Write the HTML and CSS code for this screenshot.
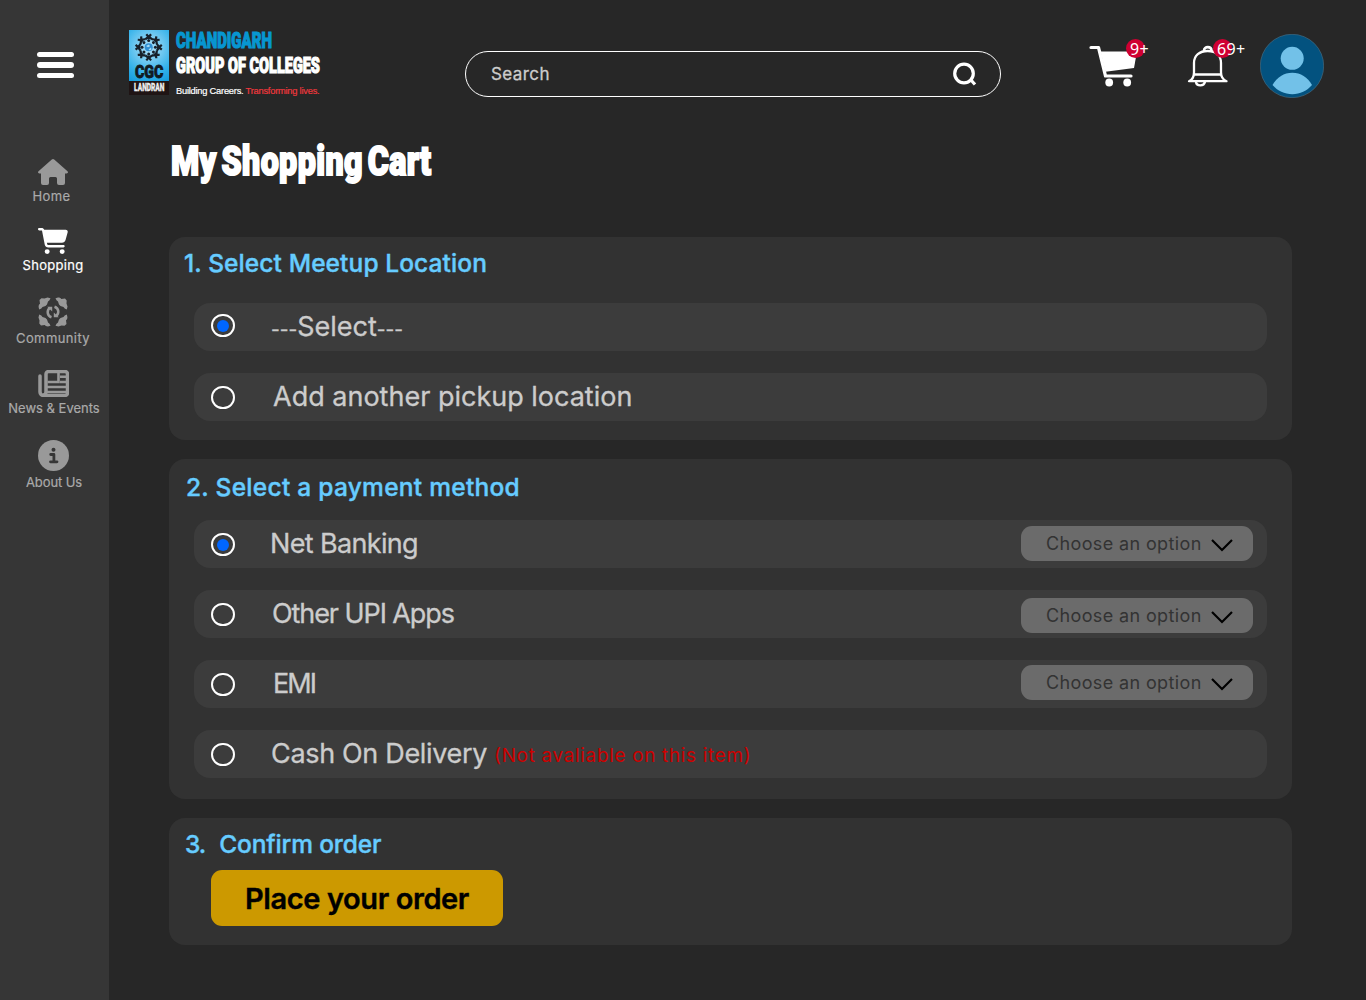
FILE: index.html
```html
<!DOCTYPE html>
<html lang="en">
<head>
<meta charset="utf-8">
<title>My Shopping Cart</title>
<link rel="stylesheet" href="styles.css">
</head>
<body>
<aside class="sidebar">
  <button class="menu" aria-label="Menu"><span></span><span></span><span></span></button>
  <nav class="nav">
    <a class="nav-item home"><svg width="30" height="26" viewBox="0 0 30 26"><path d="M13.8.6a1.8 1.8 0 0 1 2.4 0L29.5 12.300c.9.9.4 2.100-.9 2.100H27v9.600a2 2 0 0 1-2 2h-4a2 2 0 0 1-2-2v-4.500a1.500 1.500 0 0 0-1.500-1.500h-5a1.500 1.500 0 0 0-1.500 1.500V24a2 2 0 0 1-2 2H5a2 2 0 0 1-2-2v-9.600H1.400c-1.300 0-1.800-1.200-.9-2.100z"/></svg><span>Home</span></a>
    <a class="nav-item shopping active"><svg width="30" height="26" viewBox="0 0 576 512" preserveAspectRatio="none"><path d="M0 24C0 10.700 10.700 0 24 0H69.500c22 0 41.500 12.800 50.600 32h411c26.300 0 45.500 25 38.600 50.400l-41 152.300c-8.500 31.400-37 53.300-69.500 53.300H170.700l5.400 28.500c2.200 11.300 12.100 19.500 23.600 19.500H488c13.300 0 24 10.700 24 24s-10.700 24-24 24H199.700c-34.600 0-64.300-24.600-70.700-58.500L77.400 54.500c-.7-3.800-4-6.500-7.900-6.500H24C10.700 48 0 37.300 0 24zM128 464a48 48 0 1 1 96 0 48 48 0 1 1-96 0zm336-48a48 48 0 1 1 0 96 48 48 0 1 1 0-96z"/></svg><span>Shopping</span></a>
    <a class="nav-item community"><svg width="30" height="30" viewBox="0 0 30 30"><defs><path id="corner" d="M.600 10C.600 8 1.200 7.300 2 6.800L1.500 3 3.500 1.300 6.500 1.500 9.500.500 12.500 1.200 11.500 3.300 10 4.500 9 7.500 7.500 9 4.500 10 3.300 11.500 1.200 12.500z"/></defs><use href="#corner"/><use href="#corner" transform="rotate(90 15 15)"/><use href="#corner" transform="rotate(180 15 15)"/><use href="#corner" transform="rotate(270 15 15)"/><path d="M13.500 20.300C9 18.800 8.500 13.500 12 10.800M16.500 9.700c4.500 1.500 5 6.800 1.500 9.500" fill="none" stroke="#999" stroke-width="2.500"/><path d="M9.200 9.800h5v4.800zM20.800 20.200h-5v-4.800z"/></svg><span>Community</span></a>
    <a class="nav-item news"><svg width="31" height="27" viewBox="0 0 31 27"><path d="M2 6v16a3.500 3.500 0 0 0 3.500 3.500H27a2.500 2.500 0 0 0 2.500-2.500V4A2.500 2.500 0 0 0 27 1.500H10.500A2.500 2.500 0 0 0 8 4v18a3 3 0 0 1-3 3" fill="none" stroke="#999" stroke-width="3.500" stroke-linecap="round"/><path d="M20.500 3v9h-11M22 6.700h6M22 12h6M9 17h19M9 22h19" fill="none" stroke="#999" stroke-width="2.600"/></svg><span>News &amp; Events</span></a>
    <a class="nav-item about"><svg width="31" height="31" viewBox="0 0 31 31"><circle cx="15.500" cy="15.500" r="15.500"/><circle cx="15.500" cy="9.800" r="2" fill="#363636"/><path d="M12.700 14.500h3.200v6.800M12.500 21.800h6.500" fill="none" stroke="#363636" stroke-width="2.800" stroke-linecap="round" stroke-linejoin="round"/></svg><span>About Us</span></a>
  </nav>
</aside>
<main class="main">
  <header class="header">
    <div class="brand">
      <div class="emblem">
        <svg width="40" height="34" viewBox="0 0 40 34"><defs><g id="person"><circle cx="19.700" cy="10.600" r="1.500" fill="#17202a"/><path d="M19.700 9V6.500M16.300 9.300l2-1.700h2.800l2 1.700M17.300 4.200l2.400 2.800 2.400-2.800" fill="none" stroke="#17202a" stroke-width="2.200"/></g></defs><use href="#person"/><use href="#person" transform="rotate(45 19.700 17.300)"/><use href="#person" transform="rotate(90 19.700 17.300)"/><use href="#person" transform="rotate(135 19.700 17.300)"/><use href="#person" transform="rotate(180 19.700 17.300)"/><use href="#person" transform="rotate(225 19.700 17.300)"/><use href="#person" transform="rotate(270 19.700 17.300)"/><use href="#person" transform="rotate(315 19.700 17.300)"/><circle cx="19.700" cy="17.300" r="4" fill="#2f8fd3"/><path d="M17 16l3-1.500 1 1.700-2 1zM19.500 19.500l2.500-2 .5 2-1.500 1z" fill="#a9dcf4"/></svg>
        <b class="cgc"><i>CGC</i></b>
        <b class="landran"><i>LANDRAN</i></b>
      </div>
      <div class="brand-text">
        <b class="line1"><i>CHANDIGARH</i></b>
        <b class="line2"><i>GROUP OF COLLEGES</i></b>
        <span class="tagline">Building Careers. <em>Transforming lives.</em></span>
      </div>
    </div>
    <div class="search"><span>Search</span><svg width="24" height="24" viewBox="0 0 24 24" fill="none" stroke="#fff" stroke-width="3.200"><circle cx="11" cy="11.500" r="9.300"/><path d="M17.500 17.500l4.500 5"/></svg></div>
    <div class="actions">
      <div class="cart"><svg width="50" height="42" viewBox="0 0 50 42"><path d="M2 2.500h7.500L16.500 31H42" fill="none" stroke="#fff" stroke-width="3.200" stroke-linecap="round" stroke-linejoin="round"/><path d="M11.500 6.500H48L45 23l-28.500 3.700z" fill="#fff"/><circle cx="20.200" cy="37.500" r="3.900" fill="#fff"/><circle cx="38.200" cy="37.500" r="3.900" fill="#fff"/></svg><span class="badge">9+</span></div>
      <div class="bell"><svg width="42" height="42" viewBox="0 0 42 42" fill="none" stroke="#fff" stroke-width="2.300" stroke-linecap="round" stroke-linejoin="round"><path d="M2 36.200c3.500-1.500 5-5 5-9V18C7 10.500 12.500 6 20.700 6S34 10.500 34 18v9.200c0 4 2 7.500 5.500 9zM8 29.500h25.500M9 37c.5 4.500 8 4.500 9 0"/><path d="M17 5.500c0-4.500 7.500-4.500 7.500 0" stroke-width="2.600"/></svg><span class="badge">69+</span></div>
      <svg class="avatar" width="64" height="64" viewBox="0 0 64 64"><circle cx="32" cy="32" r="31.700" fill="#03527f" stroke="#4d7085" stroke-width=".6"/><circle cx="32.200" cy="24.300" r="11.500" fill="#72c1e8"/><path d="M12.500 51C17 43 24 38.700 32.300 38.700S47.600 43 52 51c-5 6-12 9.200-19.700 9.200S17.500 57 12.500 51z" fill="#72c1e8"/></svg>
    </div>
  </header>
  <h1 class="title"><i>My Shopping Cart</i></h1>
  <section class="card location">
    <h2>1. Select Meetup Location</h2>
    <div class="row first"><span class="radio on"></span><span class="label"><span class="dash">---</span>Select<span class="dash">---</span></span></div>
    <div class="row"><span class="radio"></span><span class="label another">Add another pickup location</span></div>
  </section>
  <section class="card payment">
    <h2>2. Select a payment method</h2>
    <div class="row"><span class="radio on"></span><span class="label net">Net Banking</span><div class="select"><span>Choose an option</span><svg width="22" height="13" viewBox="0 0 22 13"><path d="M1 1l10 10L21 1" fill="none" stroke="#000" stroke-width="2.200"/></svg></div></div>
    <div class="row"><span class="radio"></span><span class="label upi">Other UPI Apps</span><div class="select lower"><span>Choose an option</span><svg width="22" height="13" viewBox="0 0 22 13"><path d="M1 1l10 10L21 1" fill="none" stroke="#000" stroke-width="2.200"/></svg></div></div>
    <div class="row"><span class="radio"></span><span class="label emi">EMI</span><div class="select upper"><span>Choose an option</span><svg width="22" height="13" viewBox="0 0 22 13"><path d="M1 1l10 10L21 1" fill="none" stroke="#000" stroke-width="2.200"/></svg></div></div>
    <div class="row"><span class="radio"></span><span class="label cod">Cash On Delivery</span><span class="note">(Not avaliable on this item)</span></div>
  </section>
  <section class="card confirm">
    <h2><span class="number">3.</span><span>Confirm order</span></h2>
    <button class="order">Place your order</button>
  </section>
</main>
</body>
</html>
```
FILE: styles.css
```css
* { box-sizing: border-box; }
body { margin: 0; width: 1366px; height: 1000px; display: flex; overflow: hidden; background: #272727; font-family: Inter, "Liberation Sans", sans-serif; color: #ccc; }
i, em { font-style: normal; }
i { display: inline-block; transform-origin: 0 50%; }
button { border: 0; padding: 0; font: inherit; }
svg { display: block; flex: none; }

/* Sidebar */
.sidebar { width: 109px; flex: none; background: #363636; padding-top: 52px; }
.menu { display: flex; flex-direction: column; gap: 5px; width: 37px; margin-left: 37px; background: none; }
.menu span { height: 5.400px; border-radius: 3px; background: #fff; }
.nav { display: flex; flex-direction: column; gap: 24px; margin-top: 80.800px; }
.nav-item { display: flex; flex-direction: column; align-items: center; gap: 3px; width: 106px; fill: #999; color: #aaa; font-size: 13px; line-height: 16px; white-space: nowrap; -webkit-text-stroke: .2px; }
.nav-item.active { fill: #fff; color: #fff; }
.home { letter-spacing: .39px; }
.home span { margin-right: 3px; }
.shopping { letter-spacing: .31px; }
.community { letter-spacing: .4px; }
.news span { margin-left: 2px; }
.about { letter-spacing: -.1px; }
.about span { margin-left: 2px; }

.main { flex: 1; padding: 0 74px 0 60px; white-space: nowrap; }

/* Header */
.header { display: flex; height: 132px; margin: 0 -40px; padding-top: 30px; align-items: flex-start; }
.brand { display: flex; width: 336px; gap: 7px; flex: none; }
.emblem { width: 40px; height: 65px; background: radial-gradient(circle at 50% 27%, #b4e2f8 0, #35b2ea 50%, #149bdc 75%); display: flex; flex-direction: column; flex: none; }
.cgc { height: 17px; font: 900 19px/15px Roboto, sans-serif; color: #111a22; padding-left: 6px; }
.cgc i { transform: scaleX(.75); -webkit-text-stroke: .8px; }
.landran { height: 14px; background: #1f1414; color: #eee; font: 900 10px/14px Roboto, sans-serif; padding-left: 4.500px; }
.landran i { transform: scaleX(.66); -webkit-text-stroke: .3px; }
.brand-text { display: flex; flex-direction: column; width: 150px; }
.line1, .line2 { font: 900 22.500px/25px Roboto, sans-serif; height: 25px; color: #0796d1; margin-top: -2px; -webkit-text-stroke: 1.200px; }
.line1 i { transform: scaleX(.665); }
.line2 { color: #fff; margin-top: 0; }
.line2 i { transform: scaleX(.644); }
.tagline { font: 9.300px/12px "Liberation Sans", sans-serif; letter-spacing: -.23px; color: #fff; margin-top: 7px; -webkit-text-stroke: .2px; }
.tagline em { color: #f0383d; }
.search { flex: none; width: 536px; height: 46px; margin-top: 21px; border: 1.500px solid #fff; border-radius: 23px; display: flex; justify-content: space-between; align-items: center; padding: 0 23px 0 25px; font-size: 17px; letter-spacing: .43px; -webkit-text-stroke: .3px; }
.actions { display: flex; margin-left: 88px; padding-top: 4px; }
.cart, .bell { position: relative; padding-top: 10.500px; width: 98px; }
.bell { width: 73px; }
.badge { position: absolute; left: 37px; top: 5px; width: 19px; height: 19px; border-radius: 50%; background: #cf0032; color: #fff; font: 16px/20px "Noto Sans", sans-serif; letter-spacing: .3px; padding-left: 4px; }
.bell .badge { left: 26px; }

.title { margin: 11px 0 0 2px; height: 94px; font: 900 41px/36px Roboto, sans-serif; color: #fff; word-spacing: -4.500px; letter-spacing: .5px; -webkit-text-stroke: 2px; }
.title i { transform: scaleX(.785); }

/* Checkout steps */
.card { background: #323232; border-radius: 16px; margin-bottom: 19px; padding: 0 25px; display: flow-root; }
.location { height: 203px; }
.payment { height: 340px; }
.confirm { height: 127px; }
h2 { margin: 11px 0 0 -10px; height: 55px; font-size: 24.500px; line-height: 30px; font-weight: 500; color: #66ccff; letter-spacing: .1px; -webkit-text-stroke: .4px; }
.payment h2 { margin: 13px 0 0 -8px; height: 48px; letter-spacing: .27px; }
.row { height: 48px; border-radius: 16px; background: #3c3c3c; display: flex; align-items: center; padding: 0 14px 0 17px; margin-bottom: 22px; font-size: 27px; }
.radio { flex: none; width: 23.500px; height: 23.500px; border: 2px solid #fff; border-radius: 50%; margin: 1px 36.500px 0 0; display: grid; place-items: center; }
.first .radio { margin-top: 0; margin-bottom: 3px; }
.radio.on::after { content: ""; width: 12px; height: 12px; border-radius: 50%; background: #0066ff; }
.label { margin-bottom: 2px; -webkit-text-stroke: .3px; }
.dash { font-size: 19px; }
.another { margin-left: 2px; }
.net { letter-spacing: -.65px; margin-left: -1px; }
.upi { letter-spacing: -1.080px; margin-left: 1px; }
.emi { letter-spacing: -1.900px; margin-left: 2px; }
.cod { letter-spacing: -.33px; }
.select { width: 232px; height: 35px; margin: 0 0 2px auto; border-radius: 11px; background: #6b6b6b; color: #333; font-size: 18px; letter-spacing: .37px; display: flex; align-items: center; justify-content: space-between; padding: 0 20px 0 25px; }
.select svg { margin-top: 4px; }
.select.lower { margin-bottom: -3px; }
.select.upper { margin-bottom: 3px; }
.note { color: #c00; font-size: 19px; letter-spacing: .65px; margin-left: 7px; margin-top: 2px; }
.confirm h2 { margin: 11px 0 0 -9px; height: 41px; display: flex; gap: 14px; letter-spacing: -.15px; }
.number { letter-spacing: -1px; }
.order { width: 292px; height: 56px; border-radius: 11px; background: #c90; color: #000; font-size: 29px; font-weight: 600; letter-spacing: -.4px; margin-left: 17px; -webkit-text-stroke: .4px; }
```
